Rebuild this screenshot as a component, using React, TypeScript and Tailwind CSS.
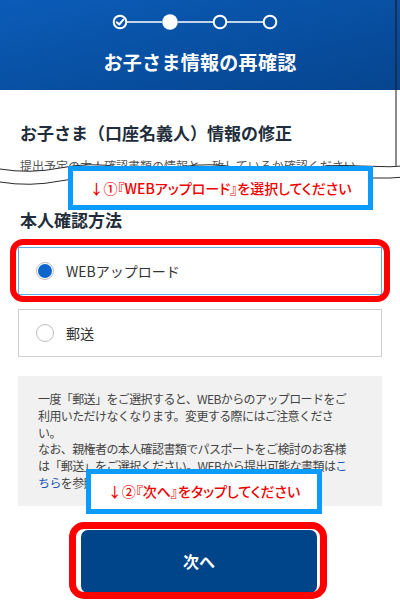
import React from "react"

const font = { fontFamily: '"Noto Sans CJK JP", "Noto Sans", sans-serif' }

function Stepper() {
  return (
    <svg width="180" height="20" viewBox="0 0 180 20" fill="none">
      <line x1="17" y1="10" x2="52" y2="10" stroke="white" strokeWidth="1.6" />
      <line x1="68" y1="10" x2="103" y2="10" stroke="white" strokeWidth="1.6" />
      <line x1="117" y1="10" x2="153" y2="10" stroke="white" strokeWidth="1.6" />
      <circle cx="10" cy="10" r="6.3" stroke="white" strokeWidth="2" />
      <polyline points="6.8,10.2 9.2,12.5 13.4,7.6" stroke="white" strokeWidth="2" strokeLinecap="round" strokeLinejoin="round" />
      <circle cx="60" cy="10" r="7.8" fill="white" />
      <circle cx="110" cy="10" r="6.3" stroke="white" strokeWidth="2" />
      <circle cx="160" cy="10" r="6.3" stroke="white" strokeWidth="2" />
    </svg>
  )
}

function Radio({ checked }: { checked?: boolean }) {
  return (
    <span className="flex h-[18px] w-[18px] shrink-0 items-center justify-center rounded-full border border-[#bdbdbd] bg-white">
      {checked && <span className="h-[14px] w-[14px] rounded-full bg-[#0a66cc]" />}
    </span>
  )
}

function Callout({ className, children }: { className: string; children: React.ReactNode }) {
  return (
    <div
      className={`absolute flex items-center justify-center border-[5px] border-[#0a9bff] bg-white text-[14px] font-medium text-[#f00000] [font-feature-settings:'palt'] ${className}`}
    >
      {children}
    </div>
  )
}

// torn-page cut across the first section
function Cut() {
  const upper = "M0 15 Q30 20 60 14 T120 13 T180 13 T240 14 T300 15 T360 12 T420 11"
  const lower = "M0 28 Q30 33 60 27 T120 26 T180 26 T240 27 T300 28 T360 24 T420 22"
  return (
    <svg className="absolute left-0 top-[154px]" width="400" height="42" viewBox="0 0 400 42" fill="none">
      <path d={`${upper} L420 42 L0 42 Z`} fill="white" />
      <path d={upper} stroke="#2b2b2b" strokeWidth="1" />
      <path d={lower} stroke="#2b2b2b" strokeWidth="1" />
    </svg>
  )
}

export default function App() {
  return (
    <div className="relative h-[605px] w-[400px] overflow-hidden bg-white" style={font}>
      <header className="flex h-[90px] flex-col items-center bg-gradient-to-br from-[#0b5cb8] to-[#06458f] pt-[12px]">
        <Stepper />
        <h1 className="mt-[17px] text-[19px] font-bold leading-[26px] tracking-[0.3px] text-white">
          お子さま情報の再確認
        </h1>
      </header>

      <main className="px-[18px]">
        <h2 className="mt-[31px] pl-[2px] text-[17px] font-bold leading-[24px] text-[#222d3b]">
          お子さま（口座名義人）情報の修正
        </h2>
        <p className="mt-[12px] pl-[2px] text-[12px] leading-[18px] text-[#555]">
          提出予定の本人確認書類の情報と一致しているか確認ください
        </p>

        <h3 className="mt-[33px] pl-[2px] text-[17px] font-bold leading-[24px] text-[#222d3b]">本人確認方法</h3>

        <div className="relative mt-[15px]">
          <label className="flex h-[48px] items-center gap-[12px] border-[1.5px] border-[#62aae8] pl-[17px] text-[14px] text-[#333]">
            <Radio checked />
            WEBアップロード
          </label>
          <div className="pointer-events-none absolute -bottom-[7px] -left-[8px] -right-[8px] -top-[8px] rounded-[13px] border-[6px] border-[#ff0000]" />
        </div>

        <label className="mt-[14px] flex h-[48px] items-center gap-[12px] border border-[#cfcfcf] pl-[17px] text-[14px] text-[#333]">
          <Radio />
          郵送
        </label>

        <div className="mt-[19px] bg-[#f1f1f1] px-[20px] pb-[14px] pt-[15px] text-[12px] leading-[16.8px] tracking-[-0.6px] text-[#444]">
          <p className="whitespace-nowrap">
            一度「郵送」をご選択すると、WEBからのアップロードをご
            <br />
            利用いただけなくなります。変更する際にはご注意くださ
            <br />
            い。
          </p>
          <p className="whitespace-nowrap">
            なお、親権者の本人確認書類でパスポートをご検討のお客様
            <br />
            は「郵送」をご選択ください。WEBから提出可能な書類は<span className="text-[#1a56b0]">こ</span>
            <br />
            <span className="text-[#1a56b0]">ちら</span>を参照ください。
          </p>
        </div>

        <div className="relative mx-auto mt-[24px] w-[238px] pr-[2px]">
          <button className="flex h-[63px] w-full items-center justify-center rounded-[7px] bg-[#00448a] text-[16px] font-bold text-white">
            次へ
          </button>
          <div className="pointer-events-none absolute -bottom-[6px] -left-[12px] -right-[8px] -top-[8px] rounded-[15px] border-[7px] border-[#ff0000]" />
        </div>
      </main>

      <Cut />

      <div className="absolute left-[395px] top-0 h-[90px] w-[2px] bg-[#1c2d52]" />
      <div className="absolute left-[395px] top-[90px] h-[76px] w-[2px] bg-[#8c8c8c]" />

      <Callout className="left-[68px] top-[166px] h-[44px] w-[305px]">↓①『WEBアップロード』を選択してください</Callout>
      <Callout className="left-[86px] top-[469px] h-[45px] w-[236px]">↓②『次へ』をタップしてください</Callout>
    </div>
  )
}
